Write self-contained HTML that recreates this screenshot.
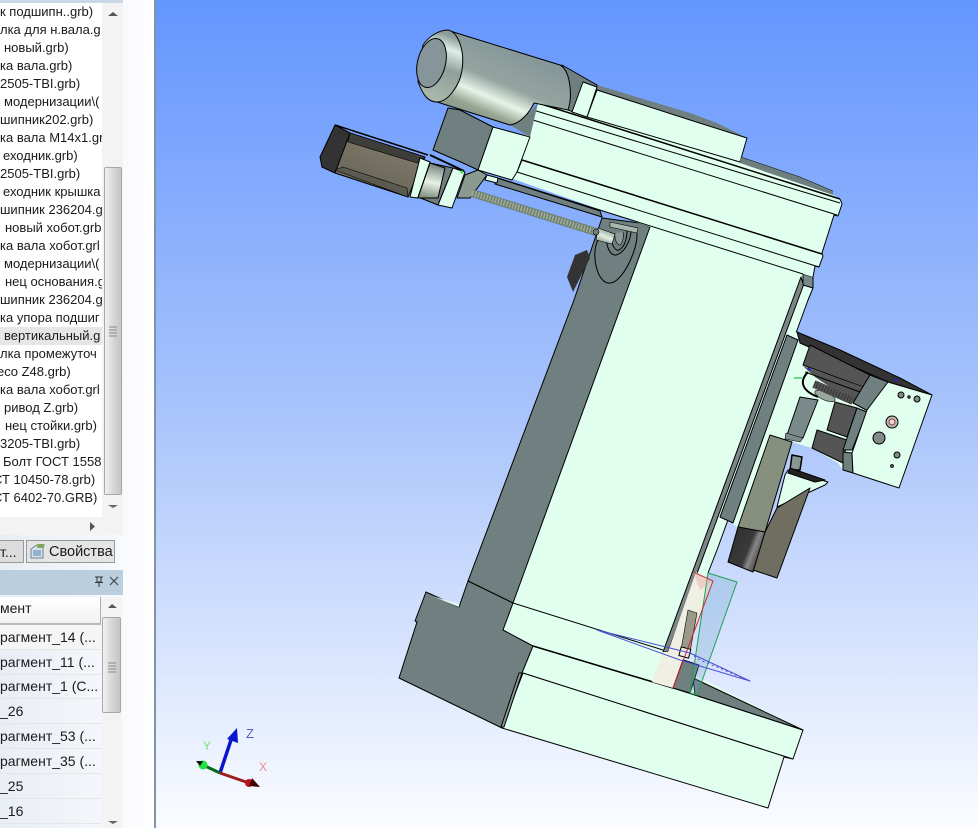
<!DOCTYPE html>
<html><head><meta charset="utf-8"><style>
html,body{margin:0;padding:0;width:978px;height:828px;overflow:hidden;background:#fff}
body{position:relative;font-family:"Liberation Sans",sans-serif;color:#1a1a1a}
.a{position:absolute}
#list{left:0;top:3px;width:102px;height:514px;overflow:hidden;background:#fff}
#list div{position:absolute;white-space:nowrap;font-size:13px;line-height:18px;height:18px;width:102px;overflow:hidden}
#tbl{left:0;top:625px;width:101px;height:203px;overflow:hidden}
#tbl div{position:absolute;left:0;width:101px;height:25px;line-height:25px;font-size:14px;white-space:nowrap;border-bottom:1px solid #e6e6e6;box-sizing:border-box}
</style></head><body>
<div class="a" style="left:0;top:0;width:154px;height:828px;background:linear-gradient(90deg,#e9eef5 0,#f4f7fb 70%,#fff)"></div>
<div class="a" style="left:0;top:0;width:123px;height:3px;background:#c9d7e6"></div>
<div class="a" style="left:0;top:3px;width:123px;height:532px;background:#f3f3f3"></div>
<div class="a" id="list">
<div style="top:0">к подшипн..grb)</div>
<div style="top:18px">лка для н.вала.g</div>
<div style="top:36px;text-indent:4px">новый.grb)</div>
<div style="top:54px">ка вала.grb)</div>
<div style="top:72px">2505-TBI.grb)</div>
<div style="top:90px;text-indent:4px">модернизации\(</div>
<div style="top:108px">шипник202.grb)</div>
<div style="top:126px">ка вала M14x1.gr</div>
<div style="top:144px;text-indent:3px">еходник.grb)</div>
<div style="top:162px">2505-TBI.grb)</div>
<div style="top:180px;text-indent:3px">еходник крышка</div>
<div style="top:198px">шипник 236204.g</div>
<div style="top:216px;text-indent:5px">новый хобот.grb</div>
<div style="top:234px">ка вала хобот.grl</div>
<div style="top:252px;text-indent:4px">модернизации\(</div>
<div style="top:270px;text-indent:5px">нец основания.g</div>
<div style="top:288px">шипник 236204.g</div>
<div style="top:306px">ка упора подшиг</div>
<div style="top:324px;background:#e6e6e6;text-indent:4px">вертикальный.g</div>
<div style="top:342px">лка промежуточ</div>
<div style="top:360px;text-indent:-3px">eco Z48.grb)</div>
<div style="top:378px">ка вала хобот.grl</div>
<div style="top:396px;text-indent:4px">ривод Z.grb)</div>
<div style="top:414px;text-indent:5px">нец стойки.grb)</div>
<div style="top:432px">3205-TBI.grb)</div>
<div style="top:450px;text-indent:3px">Болт ГОСТ 1558</div>
<div style="top:468px;text-indent:-7px">СТ 10450-78.grb)</div>
<div style="top:486px;text-indent:-7px">СТ 6402-70.GRB)</div>
</div>
<div class="a" style="left:104px;top:167px;width:18px;height:328px;background:linear-gradient(90deg,#f2f2f2,#d8d8d8 50%,#c4c4c4);border:1px solid #a8a8a8;box-sizing:border-box;border-radius:2px"></div>
<div class="a" style="left:0;top:517px;width:103px;height:18px;background:#f3f3f3"></div>
<div class="a" style="left:0;top:540px;width:24px;height:23px;background:#dcdcdc;border:1px solid #999;border-left:0;box-sizing:border-box;font-size:14px;line-height:22px">т...</div>
<div class="a" style="left:26px;top:540px;width:89px;height:23px;background:#e4e4e4;border:1px solid #999;box-sizing:border-box;font-size:14.500px;line-height:22px;padding-left:22px">Свойства</div>
<svg class="a" style="left:30px;top:543px" width="16" height="16"><path d="M1 6l6-4 7 0-1 3H13v10H1z" fill="#d6e4ef" stroke="#6a7f92"/><path d="M8 1h6l-2 4H7z" fill="#7aa84a"/><path d="M3 8h8M3 10h8M3 12h8" stroke="#4f7ea8"/></svg>
<div class="a" style="left:0;top:570px;width:123px;height:25px;background:#bacede"></div>
<div class="a" style="left:0;top:597px;width:101px;height:28px;background:linear-gradient(#fff,#f2f2f2);border-right:1px solid #aaa;border-bottom:2px solid #bbb;box-sizing:border-box;font-size:14px;line-height:22px">мент</div>
<div class="a" style="left:102px;top:597px;width:20px;height:231px;background:#f3f3f3"></div>
<div class="a" style="left:102px;top:617px;width:19px;height:96px;background:linear-gradient(90deg,#f2f2f2,#d8d8d8 50%,#c4c4c4);border:1px solid #a8a8a8;box-sizing:border-box;border-radius:2px"></div>
<svg class="a" style="left:0;top:0" width="154" height="828">
<path d="M108 16l5-4 5 4z" fill="#555"/><path d="M108 505h10l-5 3z" fill="#666"/><path d="M90 522v9l5-4.500z" fill="#555"/>
<path d="M109 327h8M109 330h8M109 333h8M109 336h8" stroke="#888"/>
<path d="M108 608l4-4 5 4z" fill="#555"/><path d="M108 821h10l-5 3z" fill="#666"/>
<path d="M108 663h8M108 666h8M108 669h8M108 672h8" stroke="#888"/>
<path d="M95 577h8M97 577v5h4v-5M95 582.500h8M99 583v4" stroke="#333" fill="none"/>
<path d="M110 577l8 8M118 577l-8 8" stroke="#444" stroke-width="1.200"/>
</svg>
<div class="a" id="tbl">
<div style="top:0;background:#f5f5f5">рагмент_14 (...</div>
<div style="top:25px">рагмент_11 (...</div>
<div style="top:49px">рагмент_1 (С...</div>
<div style="top:74px">_26</div>
<div style="top:99px">рагмент_53 (...</div>
<div style="top:124px">рагмент_35 (...</div>
<div style="top:149px">_25</div>
<div style="top:174px">_16</div>
</div>
<div class="a" style="left:154px;top:0;width:2px;height:828px;background:#7f95aa"></div>
<svg class="a" style="left:156px;top:0" width="822" height="828" viewBox="156 0 822 828" stroke-linejoin="round">
<defs>
<linearGradient id="bg" x1="0" y1="0" x2="0" y2="1"><stop offset="0" stop-color="#6496ff"/><stop offset=".5" stop-color="#a9c4fb"/><stop offset="1" stop-color="#fbfcff"/></linearGradient>
<linearGradient id="cyl" gradientUnits="userSpaceOnUse" x1="512" y1="52" x2="478" y2="132"><stop offset="0" stop-color="#87989a"/><stop offset=".38" stop-color="#94a5a0"/><stop offset=".58" stop-color="#e8f3e8"/><stop offset=".75" stop-color="#95a592"/><stop offset="1" stop-color="#7c8d80"/></linearGradient>
<linearGradient id="cyl2" gradientUnits="userSpaceOnUse" x1="431" y1="165" x2="424" y2="198"><stop offset="0" stop-color="#7e8d8a"/><stop offset=".5" stop-color="#e9f2e5"/><stop offset="1" stop-color="#7a8a7a"/></linearGradient>
<linearGradient id="cap" gradientUnits="userSpaceOnUse" x1="462" y1="40" x2="440" y2="102"><stop offset="0" stop-color="#8b9c98"/><stop offset=".2" stop-color="#dfeee8"/><stop offset=".5" stop-color="#8f9f9a"/><stop offset="1" stop-color="#a9b9ac"/></linearGradient>
<linearGradient id="strip" gradientUnits="userSpaceOnUse" x1="735" y1="545" x2="760" y2="555"><stop offset="0" stop-color="#333"/><stop offset=".5" stop-color="#3a3a3a"/><stop offset=".7" stop-color="#888"/><stop offset="1" stop-color="#4a4a4a"/></linearGradient>
<linearGradient id="mb" gradientUnits="userSpaceOnUse" x1="384" y1="150" x2="372" y2="180"><stop offset="0" stop-color="#7a7565"/><stop offset="1" stop-color="#6e6a5c"/></linearGradient>
<linearGradient id="shaft" gradientUnits="userSpaceOnUse" x1="610" y1="230" x2="604" y2="245"><stop offset="0" stop-color="#8a9a90"/><stop offset=".5" stop-color="#e3eee3"/><stop offset="1" stop-color="#7d8d80"/></linearGradient>
</defs>
<rect x="156" y="0" width="822" height="828" fill="url(#bg)"/>

<g stroke="#000" stroke-width="1">
<!-- base lower -->
<path d="M502 728L523 673L793 759L784 757L768 808Z" fill="#e0ffee"/>
<path d="M503 630L513 603L650 227L803 274L813 277L665 660L803 730L793 759L523 673Z" fill="#e0ffee" stroke="none"/>
<path d="M513 603L663 650M533 646L673 688L803 730L793 759L523 673" fill="none"/>
<path d="M533 646L673 688" fill="none" stroke-width="1.600"/>
<!-- column dark side -->
<path d="M468 581L574 300L602 218L640 223L650 227L513 603Z" fill="#707f7f"/>
<path d="M426 592L459 607L468 581L513 603L503 630L533 646L522 673L502 728L399 678L417 622L415 621Z" fill="#707f7f"/>
<path d="M432 596L459 604L459 607Z" fill="#e0ffee" stroke="none"/>
<path d="M519 673L522 673L504 727L501 727Z" fill="#8a9a9a"/>
<!-- black knob -->
<path d="M567 277L575 255L587 250L590 258L573 292Z" fill="#333" stroke="none"/>
<!-- right side strip -->
<path d="M805 287L813 288L808 300L717 550L708 573L668 652L668 640Z" fill="#e0ffee" stroke="none"/>
<path d="M813 288L808 300L717 550L708 573" fill="none"/>
<path d="M801 277L803.500 285L668 652L663 652Z" fill="#7b8686"/>
<path d="M803 274L813 277L813 288L803 285Z" fill="#7a8a8a"/>
<!-- base triangle + post -->
<path d="M693 678L803 730L695 695Z" fill="#6f7e7e"/>
<path d="M668 652L696 572L713 581L673 688L652 682L663 652Z" fill="#efefe4" stroke="none"/>
<path d="M683 660L699 665L690 693L673 688Z" fill="#707f7f"/>
<path d="M688 610L697 613L690 652L681 650Z" fill="#9a9a8a" stroke-width=".6"/>
<rect x="680" y="648" width="10" height="9" fill="#efefe4" transform="rotate(15 685 652)"/>
<!-- head -->
<path d="M538 103L690 120L747 138L740 157L800 177L833 191L833 195L840 199L842 204L838 216L834 215L822 253L823 256L819 267L815 266L813 277L803 274L650 227L513 179L480 170L492 137L527 135Z" fill="#e0ffee" stroke="none"/>
<path d="M533 110L840 203M533 120L837 215M517 172L819 267M498 178L803 274" fill="none"/>
<path d="M538 103L840 199M522 160L822 254" fill="none" stroke-width="1.500"/>
<path d="M840 199L842 204L838 216L834 215L822 253L823 256L819 267L815 266L813 277" fill="none"/>
<path d="M597 85L690 113L717 123L747 138L740 160L587 117Z" fill="#707f7f" stroke="none"/>
<path d="M597 90L690 120L747 138L740 162L587 117Z" fill="#e0ffee"/>
<path d="M741 157L800 177L833 191L833 195L740 163Z" fill="#6f7e7e" stroke="none"/>
<path d="M741 157L800 177L833 191" fill="none" stroke-width=".5"/>
<!-- notch -->
<path d="M517 160L522 160L517 172L513 172Z" fill="#707f7f"/>
<!-- dark bracket -->
<path d="M448 108L433 150L463 163L478 170L493 127L460 110Z" fill="#707f7f"/>
<path d="M493 127L530 137L517 172L512 180L478 170Z" fill="#e0ffee"/>
<path d="M497 178L600 211L602 217L495 184Z" fill="#707f7f"/>
<path d="M530 112L538 103L530 137L510 125Z" fill="#707f7f" stroke="none"/>
<path d="M487 175L498 178L497 183L485 180Z" fill="#e0ffee"/>
<!-- big motor -->
<path d="M562 65L597 85L587 117L568 110Z" fill="#6f7e7e"/>
<path d="M583 82L597 87L587 117L572 112Z" fill="#e0ffee"/>
<path d="M450 31L560 65C570 70 573 95 568 110L534 103C530 112 520 124 510 125L437 102Z" fill="url(#cyl)"/>
<path d="M423 45C430 35 440 30 448 30C458 32 465 50 462 70C460 85 448 102 437 102C428 102 423 95 418 82Z" fill="url(#cap)"/>
<ellipse cx="431.500" cy="63" rx="14" ry="25" fill="#85959a" transform="rotate(14 431.500 63)"/>
<!-- lower motor -->
<path d="M335 125L320 157L322 167L335 173L350 133Z" fill="#333"/>
<path d="M350 133L425 157L408 197L335 173Z" fill="url(#mb)"/>
<path d="M350 133L425 157L417 163L348 142Z" fill="#3d3d3a" stroke-width=".6"/>
<path d="M343 167L407 188L408 197L335 170Z" fill="#5a5a50" stroke-width=".6"/>
<path d="M335 125L428 155" fill="none" stroke-width="1.500"/>
<path d="M420 158L430 162L418 198L410 197Z" fill="#e0ffee"/>
<path d="M430 163L453 168L438 205L418 197Z" fill="#6f7e7e"/>
<path d="M430 163L445 168L438 198L418 198Z" fill="url(#cyl2)"/>
<path d="M453 168L465 172L452 208L438 205Z" fill="#e0ffee"/>
<path d="M465 175L478 170L487 175L470 198L457 198Z" fill="#8b9a90"/>
<path d="M430 155L464 171" stroke-width="2" fill="none"/>
<circle cx="462" cy="172" r="1.500" fill="#33dd55" stroke="none"/>
<!-- screw -->
<path d="M472 193L596 232" stroke="#6e7f70" stroke-width="8" fill="none"/>
<path d="M472 193L596 232" stroke="#a0ad98" stroke-width="6" stroke-dasharray="1.500 1.500" fill="none"/>
<!-- bearing & disc -->
<path d="M598 240C590 255 598 285 610 283C622 283 638 250 637 233" fill="none"/>
<path d="M607 234C605 245 610 256 616 255C624 253 630 242 631 232" fill="none"/>
<path d="M611 232C610 240 614 252 619 250C625 247 627 238 627 230" fill="none"/>
<path d="M615 233C614 240 618 246 620 245C623 243 624 236 623 232" fill="#8a9a9a" stroke-width=".6"/>
<path d="M610 222L638 228L637 233L610 227Z" fill="#a8b8ae" stroke-width=".6"/>
<path d="M598 228L615 234L612 244L596 240Z" fill="url(#shaft)" stroke-width=".6"/>
<circle cx="596" cy="232" r="3" fill="#707f7f" stroke-width=".6"/>

<!-- right assembly -->
<path d="M787 335L797 332L932 395L899 488L853 473L843 470L838 463L812 448L792 442L765 532L738 527L720 517Z" fill="#e0ffee" stroke="none"/>
<path d="M787 335L798 340L733 523L720 517Z" fill="#707f7f"/>
<path d="M797 332L840 350L900 378L932 395L888 382L800 343Z" fill="#333"/>
<path d="M810 345L870 375L863 387L803 365Z" fill="#555"/>
<path d="M803 366L863 387L857 405L815 377Z" fill="#555" stroke="none"/>
<path d="M805 372L860 392" fill="none"/>
<path d="M835 402L857 408L847 437L827 430Z" fill="#555"/>
<path d="M817 430L847 440L843 463L812 448Z" fill="#555"/>
<path d="M800 397L818 400L803 438L787 435Z" fill="#7a8a8a"/>
<path d="M786 433L803 438L800 442L785 439Z" fill="#7a8a8a" stroke-width=".6"/>
<path d="M870 375L888 382L868 411L853 403Z" fill="#707f7f"/>
<path d="M857 408L867 412L852 450L843 450Z" fill="#707f7f"/>
<path d="M843 452L852 453L853 473L843 470Z" fill="#707f7f"/>
<path d="M888 382L932 395L899 488L853 473L852 453L867 410Z" fill="#e0ffee"/>
<circle cx="901" cy="395" r="3" fill="#808c88"/><circle cx="909" cy="397" r="1.200" fill="#808c88"/><circle cx="917" cy="399" r="3" fill="#808c88"/>
<circle cx="892" cy="422" r="6" fill="#b5c0b8"/><circle cx="892" cy="422" r="3" fill="#ddd" stroke="#b03030"/>
<circle cx="879" cy="438" r="6" fill="#808c88"/><circle cx="897" cy="455" r="3" fill="#808c88"/><circle cx="892" cy="466" r="1.400" fill="#808c88"/>
<ellipse cx="825" cy="396" rx="11" ry="4" fill="#99a79f" stroke-width=".6" transform="rotate(24 825 396)"/>
<path d="M814 384L853 401" stroke="#555" stroke-width="8" fill="none"/>
<path d="M814 384L853 401" stroke="#333" stroke-width="7" stroke-dasharray="1 2" fill="none"/>
<path d="M808 372C800 380 800 390 818 397" stroke-width="2" fill="none"/>
<path d="M770 435L792 442L765 532L738 527Z" fill="#87907f"/>
<path d="M792 455L802 457L800 470L790 470Z" fill="#889890" stroke-width="1.500"/>
<path d="M788 470L828 482L825 485L777 507L785 475Z" fill="#e0ffee"/>
<path d="M790 468L825 480L815 482L788 473Z" fill="#222"/>
<path d="M777 508L810 488L777 578L753 570L765 532Z" fill="#6f6e60"/>
<path d="M738 527L765 532L753 572L728 562Z" fill="url(#strip)"/>
</g>
<path d="M794 378h8" stroke="#3ad060" stroke-width="1.500"/>
<circle cx="809" cy="369" r="1.500" fill="#2222cc"/>
<circle cx="896" cy="380" r="1.500" fill="#2222cc"/>

<!-- section planes -->
<path d="M708 573L737 582L697 695L690 693Z" fill="#6aa6c8" fill-opacity=".28" stroke="#22a050"/>
<path d="M693 572L713 581L673 688" fill="none" stroke="#d02030"/>
<path d="M693 572L700 590L713 581" fill="#e8a0a0" fill-opacity=".4" stroke="none"/>
<path d="M597 630L690 653L750 681L680 660Z" fill="none" stroke="#4a4fd0"/>
<path d="M690 653L700 660L750 681" stroke="#4a4fd0" stroke-dasharray="2 3" fill="none"/>

<!-- axes -->
<g>
<path d="M220 773L232 737" stroke="#0a14d0" stroke-width="3.500"/>
<path d="M237 728L238 743L227 739Z" fill="#0a14d0"/>
<path d="M220 773L203 765" stroke="#0a6a1a" stroke-width="3"/>
<circle cx="203" cy="765" r="4.500" fill="#22e040"/>
<path d="M196 761L203 761L200 766Z" fill="#111"/>
<path d="M220 773L249 783" stroke="#9a1c1c" stroke-width="3"/>
<circle cx="249" cy="783" r="4" fill="#c01020"/>
<path d="M252 778L260 787L249 786Z" fill="#400"/>
</g>
<text x="246" y="738" font-family="Liberation Sans" font-size="13" fill="#5a5ac8">Z</text>
<text x="203" y="750" font-family="Liberation Sans" font-size="12" fill="#78e078">Y</text>
<text x="259" y="771" font-family="Liberation Sans" font-size="12" fill="#e89090">X</text>
</svg>
</body></html>
